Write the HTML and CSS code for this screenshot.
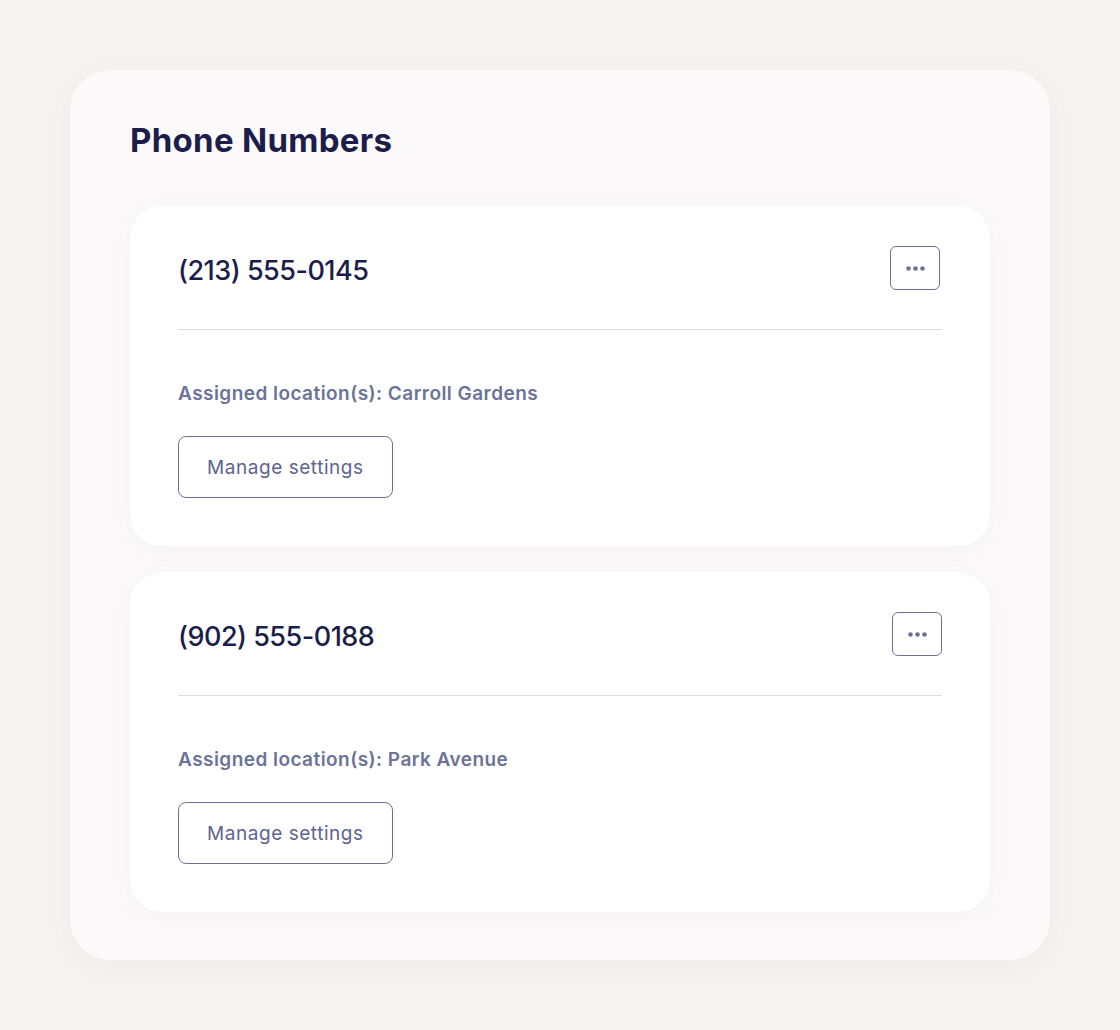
FILE: index.html
```html
<!DOCTYPE html>
<html lang="en">
<head>
<meta charset="utf-8">
<title>Phone Numbers</title>
<link rel="stylesheet" href="styles.css">
</head>
<body>
<main class="page">
  <section class="panel">
    <h1 class="panel-title">Phone Numbers</h1>
    <div class="number-list">
      <article class="number-card">
        <header class="number-head">
          <h2 class="number">(213) 555-0145</h2>
          <button class="more-btn more-btn--first" aria-label="More options">
            <svg width="19" height="5" viewBox="0 0 19 5"><circle cx="2.5" cy="2.5" r="2.3"/><circle cx="9.5" cy="2.5" r="2.3"/><circle cx="16.5" cy="2.5" r="2.3"/></svg>
          </button>
        </header>
        <div class="number-body">
          <p class="assigned">Assigned location(s): Carroll Gardens</p>
          <button class="manage-btn">Manage settings</button>
        </div>
      </article>
      <article class="number-card">
        <header class="number-head">
          <h2 class="number">(902) 555-0188</h2>
          <button class="more-btn" aria-label="More options">
            <svg width="19" height="5" viewBox="0 0 19 5"><circle cx="2.5" cy="2.5" r="2.3"/><circle cx="9.5" cy="2.5" r="2.3"/><circle cx="16.5" cy="2.5" r="2.3"/></svg>
          </button>
        </header>
        <div class="number-body">
          <p class="assigned">Assigned location(s): Park Avenue</p>
          <button class="manage-btn">Manage settings</button>
        </div>
      </article>
    </div>
  </section>
</main>
</body>
</html>
```

FILE: styles.css
```css
* { box-sizing: border-box; }

html, body {
  margin: 0;
  padding: 0;
  background: #f6f3f2;
  font-family: "Inter", "Noto Sans", sans-serif;
  color: #1b1e4b;
}

.page {
  padding: 70px;
}

.panel {
  width: 980px;
  background: #fbf9fa;
  border-radius: 40px;
  padding: 52px 60px 48px;
  box-shadow: 0 6px 30px rgba(120, 100, 100, 0.06);
}

.panel-title {
  margin: 0 0 48px;
  font-size: 33px;
  line-height: 36px;
  font-weight: 700;
  letter-spacing: 0.3px;
  color: #1b1e4b;
}

.number-list {
  display: flex;
  flex-direction: column;
  gap: 26px;
}

.number-card {
  background: #ffffff;
  border-radius: 32px;
  padding: 40px 48px 48px;
  box-shadow: 0 4px 24px rgba(120, 100, 100, 0.05);
}

.number-head {
  display: flex;
  align-items: center;
  justify-content: space-between;
  padding-bottom: 39px;
  border-bottom: 1px solid #dddee4;
}

.number {
  margin: 0;
  padding-top: 6px;
  font-size: 27px;
  line-height: 32px;
  font-weight: 500;
  letter-spacing: -0.5px;
  color: #1b1e4b;
}

.more-btn {
  width: 50px;
  height: 44px;
  display: flex;
  align-items: center;
  justify-content: center;
  background: #ffffff;
  border: 1px solid #6b7296;
  border-radius: 6px;
  padding: 0;
  fill: #6b7296;
}

/* the first row's menu button sits a touch further left */
.more-btn--first {
  margin-right: 2px;
}

.number-body {
  padding-top: 52px;
}

.assigned {
  margin: 0 0 30px;
  font-size: 19px;
  line-height: 24px;
  font-weight: 600;
  letter-spacing: 0.45px;
  color: #6b7398;
}

.manage-btn {
  display: block;
  height: 62px;
  padding: 0 28px;
  background: #ffffff;
  border: 1px solid #6b7296;
  border-radius: 8px;
  font-family: inherit;
  font-size: 19px;
  font-weight: 400;
  letter-spacing: 0.55px;
  color: #5d6590;
}
```
